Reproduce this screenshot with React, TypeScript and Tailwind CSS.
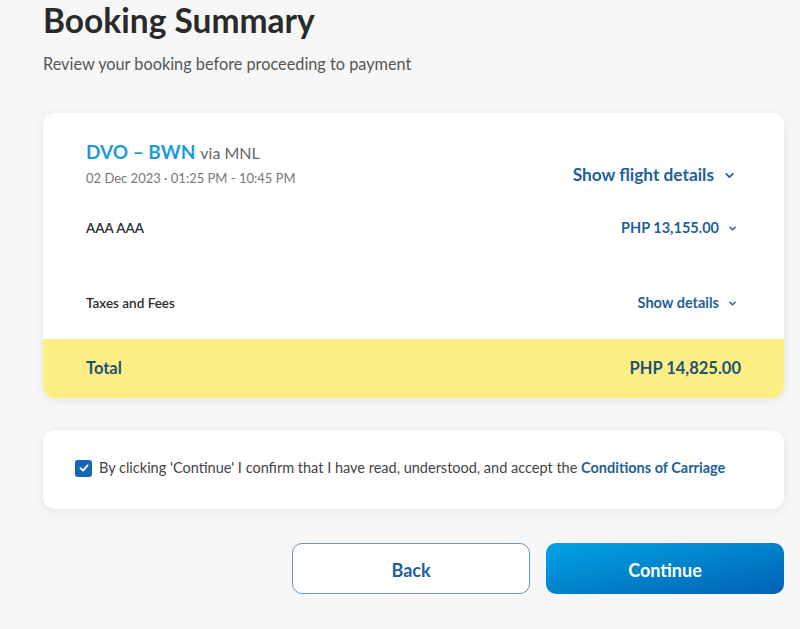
import React from "react";

const Chevron = ({ size = 10 }: { size?: number }) => (
  <svg width={size} height={size} viewBox="0 0 10 10" fill="none" className="shrink-0">
    <polyline points="2,3.5 5,6.5 8,3.5" stroke="currentColor" strokeWidth="1.6" strokeLinecap="round" strokeLinejoin="round" />
  </svg>
);

function FareRow({ label, action }: { label: string; action: string }) {
  return (
    <div className="flex h-[20px] items-center justify-between">
      <span className="text-[13.5px] font-semibold text-[#2b2b2b]">{label}</span>
      <button className="flex items-center gap-[9px] pr-[4px] text-[14.5px] font-bold text-[#1f5f99]">
        {action}
        <Chevron size={9} />
      </button>
    </div>
  );
}

export default function App() {
  return (
    <div className="min-h-[629px] w-full bg-[#f7f7f7] pl-[43px] pr-[16px] font-['Lato','Open_Sans',sans-serif] text-[#333]">
      <h1 className="text-[33.5px] font-bold leading-[40px] text-[#2a2a2a]">Booking Summary</h1>
      <p className="mt-[14px] text-[16.3px] leading-[20px] text-[#555]">
        Review your booking before proceeding to payment
      </p>

      <section className="mt-[39px] overflow-hidden rounded-[12px] bg-white shadow-[0_2px_10px_rgba(0,0,0,0.08)]">
        <div className="px-[43px] pt-[27px]">
          <div className="flex items-end justify-between">
            <div>
              <div className="flex items-baseline gap-[5px] leading-[24px]">
                <span className="text-[19px] font-bold text-[#1e9bd7]">DVO – BWN</span>
                <span className="text-[16px] text-[#666]">via MNL</span>
              </div>
              <div className="mt-[4px] text-[13px] leading-[18px] text-[#777]">
                02 Dec 2023 · 01:25 PM - 10:45 PM
              </div>
            </div>
            <button className="flex items-center gap-[10px] pr-[6px] text-[17.3px] font-bold leading-[24px] text-[#1f5f99]">
              Show flight details
              <Chevron size={11} />
            </button>
          </div>

          <div className="mt-[31px]">
            <FareRow label="AAA AAA" action="PHP 13,155.00" />
          </div>
          <div className="mt-[55px]">
            <FareRow label="Taxes and Fees" action="Show details" />
          </div>
        </div>

        <div className="mt-[26px] flex h-[59px] items-center justify-between bg-[#fdee86] px-[43px] text-[16.5px] font-bold text-[#1d5373]">
          <span>Total</span>
          <span>PHP 14,825.00</span>
        </div>
      </section>

      <section className="mt-[32px] flex h-[79px] items-center rounded-[12px] bg-white px-[32px] pb-[3px] shadow-[0_2px_10px_rgba(0,0,0,0.08)]">
        <label className="flex items-center gap-[7px] text-[14.5px] text-[#444]">
          <span className="flex h-[17px] w-[17px] shrink-0 items-center justify-center rounded-[3px] bg-[#1466b8]">
            <svg width="12" height="12" viewBox="0 0 12 12" fill="none">
              <polyline points="2.5,6.2 5,8.6 9.6,3.4" stroke="white" strokeWidth="1.8" strokeLinecap="round" strokeLinejoin="round" />
            </svg>
          </span>
          <span>
            By clicking 'Continue' I confirm that I have read, understood, and accept the{" "}
            <a className="font-bold text-[#1f5f99]">Conditions of Carriage</a>
          </span>
        </label>
      </section>

      <div className="mt-[34px] flex justify-end gap-[16px]">
        <button className="h-[51px] w-[238px] rounded-[10px] border border-[#6a95b8] bg-white pt-[3px] text-[18px] font-bold text-[#1f5f99]">
          Back
        </button>
        <button className="h-[51px] w-[238px] rounded-[10px] bg-gradient-to-br from-[#00a4e4] to-[#0062b2] pt-[3px] text-[18px] font-bold text-white">
          Continue
        </button>
      </div>
    </div>
  );
}
